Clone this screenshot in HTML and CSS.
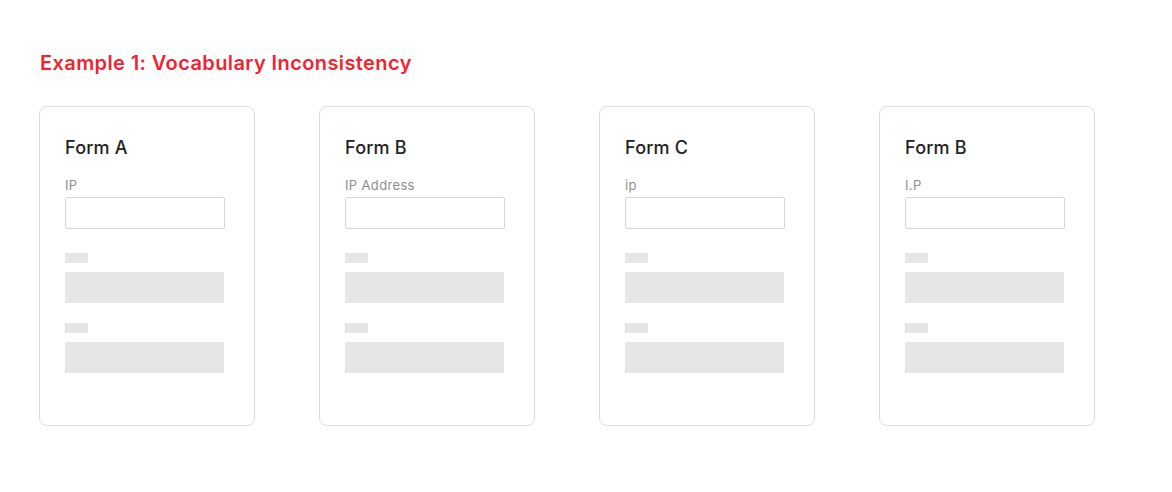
FILE: index.html
```html
<!DOCTYPE html>
<html lang="en">
<head>
<meta charset="utf-8">
<link rel="stylesheet" href="styles.css">
</head>
<body>
<main class="page">
  <h1 class="title">Example 1: Vocabulary Inconsistency</h1>
  <div class="cards">
    <section class="card">
      <h2 class="card-title">Form A</h2>
      <label class="field-label">IP</label>
      <div class="input"></div>
      <div class="ph-label first"></div>
      <div class="ph-input"></div>
      <div class="ph-label"></div>
      <div class="ph-input"></div>
    </section>
    <section class="card">
      <h2 class="card-title">Form B</h2>
      <label class="field-label">IP Address</label>
      <div class="input"></div>
      <div class="ph-label first"></div>
      <div class="ph-input"></div>
      <div class="ph-label"></div>
      <div class="ph-input"></div>
    </section>
    <section class="card">
      <h2 class="card-title">Form C</h2>
      <label class="field-label">ip</label>
      <div class="input"></div>
      <div class="ph-label first"></div>
      <div class="ph-input"></div>
      <div class="ph-label"></div>
      <div class="ph-input"></div>
    </section>
    <section class="card">
      <h2 class="card-title">Form B</h2>
      <label class="field-label">I.P</label>
      <div class="input"></div>
      <div class="ph-label first"></div>
      <div class="ph-input"></div>
      <div class="ph-label"></div>
      <div class="ph-input"></div>
    </section>
  </div>
</main>
</body>
</html>
```

FILE: styles.css
```css
* { box-sizing: border-box; }
html, body { margin: 0; padding: 0; background: #fff; }
body { font-family: Inter, "Noto Sans", sans-serif; }
.page { padding: 51px 0 0 39px; }
.title {
  margin: 0;
  font-size: 20px;
  line-height: 24px;
  font-weight: 600;
  color: #f1232f;
  letter-spacing: 0.4px;
  padding-left: 1px;
}
.cards {
  display: flex;
  gap: 64px;
  margin-top: 31px;
}
.card {
  width: 216px;
  height: 320px;
  border: 1px solid #dcdcdc;
  border-radius: 8px;
  padding: 29px 0 0 25px;
  display: flex;
  flex-direction: column;
  align-items: flex-start;
}
.card-title {
  margin: 0;
  font-size: 18px;
  line-height: 24px;
  font-weight: 500;
  letter-spacing: 0.2px;
  color: #222;
}
.field-label {
  margin-top: 17px;
  font-size: 13px;
  line-height: 16px;
  font-weight: 400;
  letter-spacing: 0.35px;
  color: #8e8e8e;
}
.input {
  margin-top: 4px;
  width: 160px;
  height: 32px;
  border: 1px solid #d6d6d6;
  border-radius: 2px;
}
.ph-label {
  width: 23px;
  height: 10px;
  background: #e6e6e6;
  margin-top: 20px;
}
.ph-label.first { margin-top: 24px; }
.ph-input {
  width: 159px;
  height: 31px;
  background: #e6e6e6;
  margin-top: 9px;
}
```
